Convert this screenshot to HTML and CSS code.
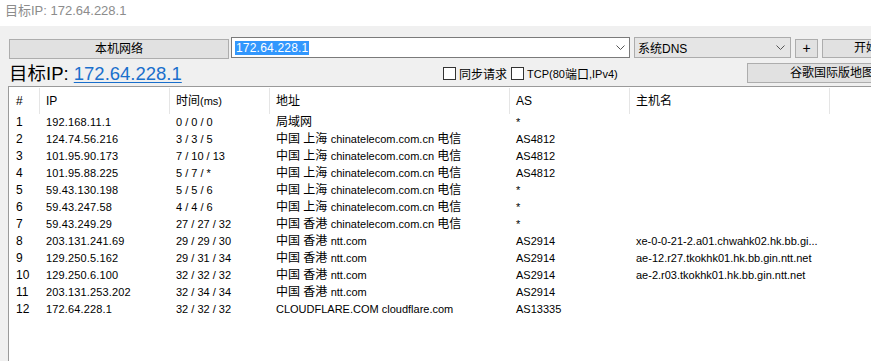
FILE: index.html
```html
<!DOCTYPE html>
<html lang="zh">
<head>
<meta charset="utf-8">
<title>目标IP: 172.64.228.1</title>
<link rel="stylesheet" href="styles.css">
</head>
<body>
<div class="titlebar">目标IP: 172.64.228.1</div>
<div class="main">
  <div class="toolbar">
    <button class="btn btn-local">本机网络</button>
    <div class="combo">
      <span class="sel">172.64.228.1</span>
      <svg class="chev" width="9" height="6" viewBox="0 0 9 6"><polyline points="0.5,0.5 4.5,4.5 8.5,0.5" fill="none" stroke="#555" stroke-width="1"/></svg>
    </div>
    <div class="dns">
      <span>系统DNS</span>
      <svg class="chev" width="9" height="6" viewBox="0 0 9 6"><polyline points="0.5,0.5 4.5,4.5 8.5,0.5" fill="none" stroke="#555" stroke-width="1"/></svg>
    </div>
    <button class="btn btn-plus">+</button>
    <button class="btn btn-start">开始</button>
  </div>
  <div class="inforow">
    <div class="target">目标IP: <a class="ip" href="#">172.64.228.1</a></div>
    <label class="chk chk1"><span class="box"></span>同步请求</label>
    <label class="chk chk2"><span class="box"></span><span class="lat">TCP(80</span>端口<span class="lat">,IPv4)</span></label>
    <button class="btn btn-map">谷歌国际版地图</button>
  </div>
  <div class="list">
    <div class="grid head">
      <div class="c">#</div><div class="c">IP</div><div class="c">时间<span class="lat">(ms)</span></div><div class="c">地址</div><div class="c">AS</div><div class="c">主机名</div><div class="c last"></div>
    </div>
    <div class="grid row"><div class="c">1</div><div class="c ipc">192.168.11.1</div><div class="c t">0 / 0 / 0</div><div class="c">局域网</div><div class="c as">*</div><div class="c"></div><div></div></div>
    <div class="grid row"><div class="c">2</div><div class="c ipc">124.74.56.216</div><div class="c t">3 / 3 / 5</div><div class="c">中国 上海 <span class="lat">chinatelecom.com.cn</span> 电信</div><div class="c as">AS4812</div><div class="c"></div><div></div></div>
    <div class="grid row"><div class="c">3</div><div class="c ipc">101.95.90.173</div><div class="c t">7 / 10 / 13</div><div class="c">中国 上海 <span class="lat">chinatelecom.com.cn</span> 电信</div><div class="c as">AS4812</div><div class="c"></div><div></div></div>
    <div class="grid row"><div class="c">4</div><div class="c ipc">101.95.88.225</div><div class="c t">5 / 7 / *</div><div class="c">中国 上海 <span class="lat">chinatelecom.com.cn</span> 电信</div><div class="c as">AS4812</div><div class="c"></div><div></div></div>
    <div class="grid row"><div class="c">5</div><div class="c ipc">59.43.130.198</div><div class="c t">5 / 5 / 6</div><div class="c">中国 上海 <span class="lat">chinatelecom.com.cn</span> 电信</div><div class="c as">*</div><div class="c"></div><div></div></div>
    <div class="grid row"><div class="c">6</div><div class="c ipc">59.43.247.58</div><div class="c t">4 / 4 / 6</div><div class="c">中国 上海 <span class="lat">chinatelecom.com.cn</span> 电信</div><div class="c as">*</div><div class="c"></div><div></div></div>
    <div class="grid row"><div class="c">7</div><div class="c ipc">59.43.249.29</div><div class="c t">27 / 27 / 32</div><div class="c">中国 香港 <span class="lat">chinatelecom.com.cn</span> 电信</div><div class="c as">*</div><div class="c"></div><div></div></div>
    <div class="grid row"><div class="c">8</div><div class="c ipc">203.131.241.69</div><div class="c t">29 / 29 / 30</div><div class="c">中国 香港 <span class="lat">ntt.com</span></div><div class="c as">AS2914</div><div class="c host">xe-0-0-21-2.a01.chwahk02.hk.bb.gi...</div><div></div></div>
    <div class="grid row"><div class="c">9</div><div class="c ipc">129.250.5.162</div><div class="c t">29 / 31 / 34</div><div class="c">中国 香港 <span class="lat">ntt.com</span></div><div class="c as">AS2914</div><div class="c host">ae-12.r27.tkokhk01.hk.bb.gin.ntt.net</div><div></div></div>
    <div class="grid row"><div class="c">10</div><div class="c ipc">129.250.6.100</div><div class="c t">32 / 32 / 32</div><div class="c">中国 香港 <span class="lat">ntt.com</span></div><div class="c as">AS2914</div><div class="c host">ae-2.r03.tkokhk01.hk.bb.gin.ntt.net</div><div></div></div>
    <div class="grid row"><div class="c">11</div><div class="c ipc">203.131.253.202</div><div class="c t">32 / 34 / 34</div><div class="c">中国 香港 <span class="lat">ntt.com</span></div><div class="c as">AS2914</div><div class="c"></div><div></div></div>
    <div class="grid row"><div class="c">12</div><div class="c ipc">172.64.228.1</div><div class="c t">32 / 32 / 32</div><div class="c lat">CLOUDFLARE.COM cloudflare.com</div><div class="c as">AS13335</div><div class="c"></div><div></div></div>
  </div>
</div>
</body>
</html>
```
FILE: styles.css
```css
* { box-sizing: border-box; }
html, body { margin: 0; padding: 0; }
body {
  width: 871px;
  height: 361px;
  overflow: hidden;
  font-family: "Liberation Sans", "Noto Sans CJK SC", sans-serif;
  font-size: 12px;
  color: #000;
  background: #f0f0f0;
}
.titlebar {
  height: 26px;
  background: #fff;
  color: #8c8c8c;
  font-size: 13px;
  line-height: 22px;
  padding-left: 5px;
  white-space: nowrap;
}
.main {
  padding-top: 11px;
  height: 335px;
  display: flex;
  flex-direction: column;
}
.toolbar {
  display: flex;
  align-items: flex-start;
  height: 22px;
  padding-left: 9px;
  white-space: nowrap;
}
.toolbar > * { flex: none; }
.btn {
  font-family: inherit;
  font-size: 12px;
  background: #e1e1e1;
  border: 1px solid #adadad;
  color: #000;
  padding: 0;
  margin: 0;
  line-height: 17px;
}
.btn-local {
  width: 220px;
  height: 20px;
  margin-top: 2px;
}
.combo {
  margin-left: 2px;
  width: 399px;
  height: 21px;
  background: #fff;
  border: 1px solid #7a7a7a;
  display: flex;
  align-items: center;
  padding-left: 3px;
  padding-right: 4px;
}
.sel {
  background: #3297fd;
  color: #fff;
  font-size: 12px;
  line-height: 14px;
  padding: 0 1px;
  letter-spacing: 0.2px;
}
.chev { margin-left: auto; flex: none; }
.dns {
  margin-left: 4px;
  width: 157px;
  height: 21px;
  background: #e5e5e5;
  border: 1px solid #acacac;
  display: flex;
  align-items: center;
  padding-left: 3px;
  padding-right: 5px;
}
.btn-plus {
  margin-left: 4px;
  margin-top: 2px;
  width: 23px;
  height: 19px;
  font-size: 14px;
  line-height: 15px;
}
.btn-start {
  margin-left: 4px;
  margin-top: 2px;
  width: 88px;
  height: 19px;
}
.inforow {
  display: flex;
  align-items: flex-start;
  height: 21px;
  margin-top: 4px;
  padding-left: 9px;
  white-space: nowrap;
}
.inforow > * { flex: none; }
.target {
  font-size: 18.5px;
  line-height: 21px;
  width: 434px;
}
.ip {
  color: #1a6fcc;
  text-decoration: underline;
  text-underline-offset: 2px;
}
.chk {
  display: flex;
  align-items: center;
  height: 17px;
  margin-top: 2px;
  font-size: 12px;
}
.box {
  width: 13px;
  height: 13px;
  border: 1px solid #333;
  background: #fff;
  margin-right: 3px;
}
.chk1 { margin-left: 0; }
.chk2 { margin-left: 4px; }
.lat { font-size: 11px; }
.btn-map {
  margin-left: auto;
  margin-right: -46px;
  width: 170px;
  height: 20px;
}
.list {
  margin-top: 2px;
  margin-left: 8px;
  flex: 1;
  background: #fff;
  border-left: 1px solid #9a9a9a;
  border-top: 1px solid #9a9a9a;
}
.grid {
  display: grid;
  grid-template-columns: 31px 130px 100px 240px 120px 200px 1fr;
  white-space: nowrap;
}
.head {
  height: 27px;
  align-items: stretch;
}
.head .c {
  border-right: 1px solid #e5e5e5;
  margin-top: 1px;
  line-height: 26px;
}
.head .c.last { border-right: none; }
.row { height: 17px; line-height: 17px; }
.c {
  padding-left: 6px;
  overflow: hidden;
}
.grid .c:first-child { padding-left: 7px; }
.ipc { font-size: 11px; letter-spacing: 0.15px; }
.t { font-size: 11px; }
.as { font-size: 11px; }
.host { font-size: 11px; }
```
